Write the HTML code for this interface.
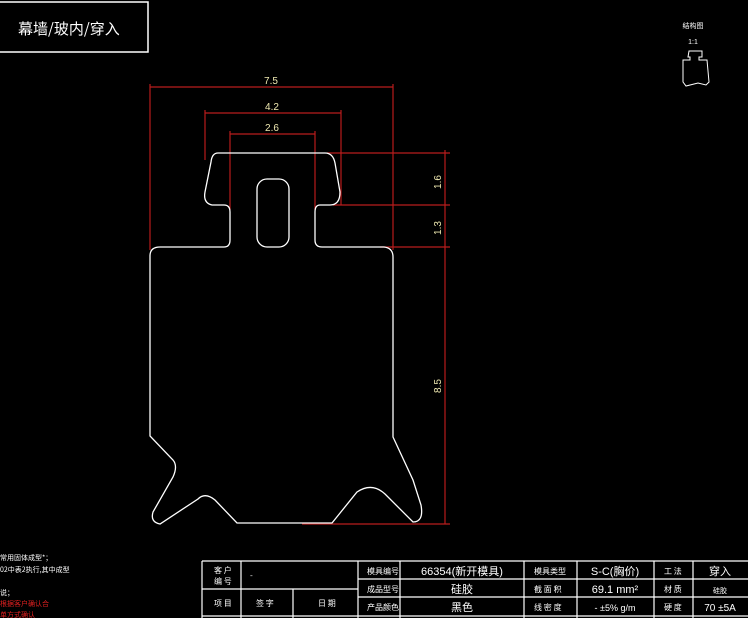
<!DOCTYPE html>
<html><head><meta charset="utf-8"><style>
body{margin:0;background:#000;width:748px;height:618px;overflow:hidden;font-family:"Liberation Sans","Noto Sans CJK SC",sans-serif}
svg{display:block}
</style></head><body>
<svg width="748" height="618" viewBox="0 0 748 618" xmlns="http://www.w3.org/2000/svg">
<rect x="0" y="0" width="748" height="618" fill="#000"/>
<!-- title box -->
<path d="M0 2 H148 V52 H0" fill="none" stroke="#fff" stroke-width="1.5"/>
<text x="18" y="34" fill="#fff" font-size="15" font-family="Noto Sans CJK SC,sans-serif">幕墙/玻内/穿入</text>
<!-- dimension lines -->
<g stroke="#b81c1c" stroke-width="1.2" fill="none">
<path d="M150 84V250M393 84V250M150 87H393"/>
<path d="M205 110V160M341 110V205M205 113H341"/>
<path d="M230 131V210M315 131V210M230 134H315"/>
<path d="M327 153H450M333 205H450M380 247H450M302 524H450M445 150V524"/>
</g>
<g fill="#eee8b0" font-size="10" font-family="Liberation Sans,sans-serif" text-anchor="middle">
<text x="271" y="84">7.5</text>
<text x="272" y="110">4.2</text>
<text x="272" y="131">2.6</text>
<text transform="translate(441,182) rotate(-90)">1.6</text>
<text transform="translate(441,228) rotate(-90)">1.3</text>
<text transform="translate(441,386) rotate(-90)">8.5</text>
</g>
<!-- profile -->
<g stroke="#fff" stroke-width="1.3" fill="none">
<path d="M218 153 H325 Q333 153 335 163 L340 192 Q340 205 330 205 L320 205 Q315 205 315 212 V240 Q315 247 322 247 H384 Q393 248 393 257 V437 L413 480 L421 505 Q424 522 413 522 L385 494 Q372 482 357 492 L332 523 H237 L215 500 Q205 492 198 499 L160 524 Q150 522 153 512 L173 477 Q178 466 173 460 L150 436 V256 Q150 247 160 247 H224 Q230 247 230 240 V212 Q230 205 224 205 H212 Q203 203 205 192 L211 162 Q212 153 218 153 Z"/>
<rect x="257" y="179" width="32" height="68" rx="10"/>
</g>
<!-- small thumbnail -->
<text x="693" y="28" fill="#fff" font-size="7" text-anchor="middle" font-family="Noto Sans CJK SC,sans-serif">结构图</text>
<text x="693" y="44" fill="#fff" font-size="7" text-anchor="middle">1:1</text>
<path d="M689 51 H702 V57 H699 V60 H707 L709 82 L706 85 L698 83 L686 86 L683 82 L683 60 H690 V57 H688 Z" stroke="#fff" stroke-width="1" fill="none"/>
<!-- left notes -->
<g font-size="7" font-family="Noto Sans CJK SC,sans-serif">
<text x="0" y="560" fill="#fff">常用固体成型*；</text>
<text x="0" y="572" fill="#fff">02中表2执行,其中成型</text>
<text x="0" y="595" fill="#fff">说；</text>
<text x="0" y="606" fill="#e02020">根据客户确认合</text>
<text x="0" y="617" fill="#e02020">单方式确认</text>
</g>
<!-- table -->
<g stroke="#fff" stroke-width="1.2" fill="none">
<path d="M202 561 H748 M202 589 H358 M358 579 H748 M358 597 H748 M202 616 H748"/>
<path d="M202 561 V618 M241 561 V618 M293 589 V618 M358 561 V618 M400 561 V618 M524 561 V618 M577 561 V618 M654 561 V618 M693 561 V618"/>
</g>
<g fill="#fff" font-size="8" font-family="Noto Sans CJK SC,sans-serif">
<text x="214" y="573">客 户</text><text x="214" y="584">编 号</text>
<text x="250" y="578">-</text>
<text x="214" y="606">项 目</text>
<text x="256" y="606">签 字</text>
<text x="318" y="606">日 期</text>
<text x="367" y="574">模具编号</text>
<text x="367" y="592">成品型号</text>
<text x="367" y="610">产品颜色</text>
<text x="534" y="574">模具类型</text>
<text x="534" y="592">截 面 积</text>
<text x="534" y="610">线 密 度</text>
<text x="664" y="574">工 法</text>
<text x="664" y="592">材 质</text>
<text x="664" y="610">硬 度</text>
</g>
<g fill="#fff" font-size="11" font-family="Liberation Sans,Noto Sans CJK SC,sans-serif" text-anchor="middle">
<text x="462" y="575">66354(新开模具)</text>
<text x="462" y="593">硅胶</text>
<text x="462" y="611">黑色</text>
<text x="615" y="575">S-C(胸价)</text>
<text x="615" y="593">69.1 mm²</text>
<text x="615" y="611" font-size="9">-  ±5% g/m</text>
<text x="720" y="575">穿入</text>
<text x="720" y="593" font-size="7">硅胶</text>
<text x="720" y="611" font-size="10">70 ±5A</text>
</g>
</svg>
</body></html>
